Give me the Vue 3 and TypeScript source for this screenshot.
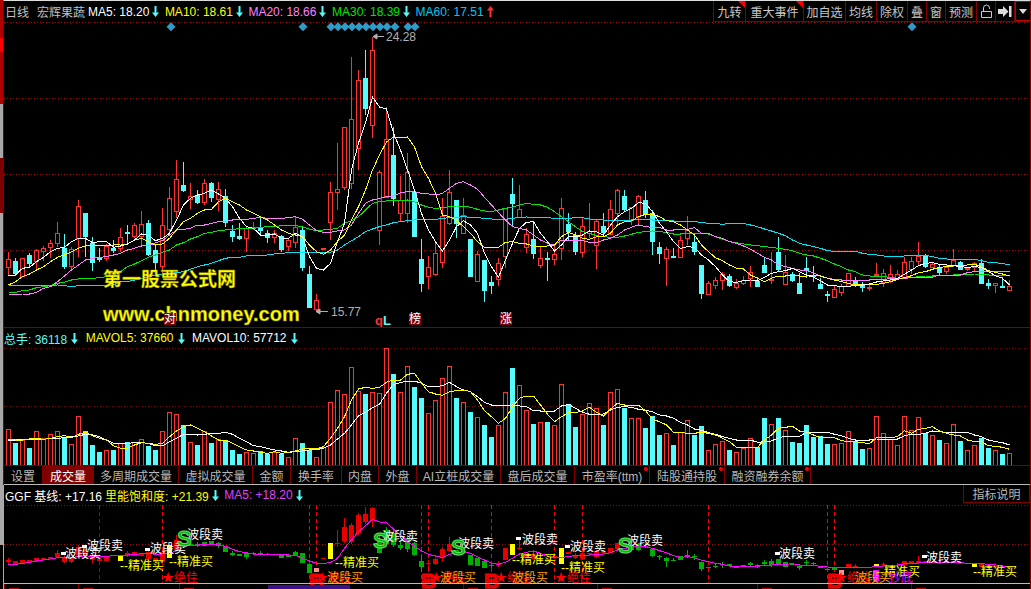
<template>
    <div class="terminal">
        <div class="strip"></div>
        <div class="main">
            <!-- K线 -->
            <div class="head">
                <span class="plain name">日线</span>
                <span class="plain stock">宏辉果蔬</span>
                <span v-for="s in maStats" :key="s.text" class="stat" :class="s.cls">
                    {{ s.text }}
                    <svg class="arrow" viewBox="0 0 7 11" width="7" height="11"><path :d="s.up ? upArrow : downArrow" :fill="s.up ? '#ff3232' : '#54fcfc'" /></svg>
                </span>
                <div class="tools">
                    <div v-for="b in tools" :key="b.key" class="tool" :class="{ flag: b.flag, last: b.key === 'menu' }" :style="{ width: b.w + 'px' }">
                        {{ b.text }}
                        <svg v-if="b.key === 'lock'" viewBox="0 0 13 15" width="13" height="15"><path d="M1.5 7.5h10v6h-10zM3.5 7V4a3 3 0 0 1 6 0v1" fill="none" stroke="#ccc" /></svg>
                        <svg v-if="b.key === 'next'" viewBox="0 0 14 11" width="14" height="11"><path d="M0 3h5V0l5.500 5.500L5 11V8H0z M11 0h2.500v11H11z" fill="#ddd" /></svg>
                        <svg v-if="b.key === 'menu'" viewBox="0 0 8 5" width="8" height="5"><path d="M0 0h8L4 5z" fill="#ddd" /></svg>
                    </div>
                </div>
            </div>
            <svg class="chart" width="1026" height="305" viewBox="4 22 1026 305">
                <line v-for="y in [22, 98, 174, 250]" :key="y" class="grid" x1="4" x2="1030" :y1="y + 0.5" :y2="y + 0.5" />
                <g shape-rendering="crispEdges">
                    <template v-for="c in candleShapes" :key="c.x">
                        <line :x1="c.x + 0.5" :x2="c.x + 0.5" :y1="c.wt" :y2="c.wb" :stroke="c.up ? '#ff3232' : '#54fcfc'" />
                        <rect v-if="c.up" :x="c.x - 1.5" :y="c.t + 0.5" width="4" :height="c.h" fill="#000" stroke="#ff3232" />
                        <rect v-else :x="c.x - 2" :y="c.t" width="5" :height="c.h + 1" fill="#54fcfc" />
                    </template>
                    <polyline v-for="l in maLines" :key="l.color" class="curve" :points="l.points" :stroke="l.color" />
                </g>
                <rect v-for="x in diamonds" :key="x" class="diamond" :x="x - 3.200" y="23.500" width="6.400" height="6.400" :transform="`rotate(45 ${x} 26.700)`" />
                <path d="M373 36.500h11M373 36.500l4-2.500v5z" stroke="#b0b0b0" fill="#b0b0b0" />
                <text class="price" x="386" y="41">24.28</text>
                <path d="M316 311.500h12M316 311.500l4-2.500v5z" stroke="#b0b0b0" fill="#b0b0b0" />
                <text class="price" x="331" y="316">15.77</text>
                <text class="mark-water" x="103" y="286">第一股票公式网</text>
                <text class="mark-water latin" x="103" y="321">www.chnmoney.com</text>
                <template v-for="m in badges" :key="m.t">
                    <rect :x="m.x" y="313" width="12" height="12" fill="#800000" />
                    <text class="badge" :x="m.x" y="323">{{ m.t }}</text>
                </template>
                <text class="ql" x="375" y="325"><tspan fill="#ff3232">q</tspan><tspan fill="#54fcfc">L</tspan></text>
            </svg>

            <!-- 成交量 -->
            <div class="head head-sub">
                <span v-for="s in volStats" :key="s.text" class="stat vol" :class="s.cls">
                    {{ s.text }}
                    <svg class="arrow" viewBox="0 0 7 11" width="7" height="11"><path :d="downArrow" fill="#54fcfc" /></svg>
                </span>
            </div>
            <svg class="chart" width="1026" height="117" viewBox="4 348 1026 117">
                <line v-for="y in [348, 406]" :key="y" class="grid dim" x1="4" x2="1030" :y1="y + 0.5" :y2="y + 0.5" />
                <g shape-rendering="crispEdges">
                    <template v-for="b in volBars" :key="b.x">
                        <rect v-if="b.up" :x="b.x - 1.5" :y="b.y + 0.5" width="4" :height="b.h" fill="#000" stroke="#ff3232" />
                        <rect v-else :x="b.x - 2" :y="b.y" width="5" :height="b.h + 1" fill="#54fcfc" />
                    </template>
                    <polyline class="curve" :points="volWhite" stroke="#fff" />
                    <polyline class="curve" :points="volYellow" stroke="#ff0" />
                </g>
            </svg>
            <div class="tabs">
                <div v-for="t in tabs" :key="t.text" class="tab" :class="{ on: t.on }" :style="{ width: t.w + 'px' }">
                    {{ t.text }}<i v-if="t.dot" class="dot"></i>
                </div>
            </div>

            <!-- GGF -->
            <div class="sub-wrap">
                <div class="head head-sub">
                    <span class="stat c-white ggf">GGF 基线: +17.16</span>
                    <span class="stat c-yellow">里能饱和度: +21.39
                        <svg class="arrow" viewBox="0 0 7 11" width="7" height="11"><path :d="downArrow" fill="#54fcfc" /></svg>
                    </span>
                    <span class="stat c-purple">MA5: +18.20
                        <svg class="arrow" viewBox="0 0 7 11" width="7" height="11"><path :d="downArrow" fill="#54fcfc" /></svg>
                    </span>
                    <div class="explain">指标说明</div>
                </div>
                <svg class="chart" width="1026" height="78" viewBox="4 505 1026 78">
                    <line v-for="y in [505, 544]" :key="y" class="grid" x1="4" x2="1030" :y1="y + 0.5" :y2="y + 0.5" />
                    <line v-for="x in dashBright" :key="x" class="dash" :x1="x + 0.5" :x2="x + 0.5" y1="505" y2="583" />
                    <line v-for="x in dashDark" :key="x" class="dash dark" :x1="x + 0.5" :x2="x + 0.5" y1="505" y2="583" />
                    <g shape-rendering="crispEdges">
                        <template v-for="c in subShapes" :key="c.x">
                            <line :x1="c.x + 0.5" :x2="c.x + 0.5" :y1="c.wt" :y2="c.wb" :stroke="c.fill" />
                            <rect :x="c.x - 2" :y="c.t" width="5" :height="c.h" :fill="c.fill" />
                        </template>
                        <polyline class="curve" :points="subLine" stroke="#f0f" />
                        <rect x="873" y="570" width="6" height="11" fill="#f0f" />
                    </g>
                    <rect v-for="a in sellArrows" :key="a.x" class="sell-arrow" :x="a.x" :y="a.y" width="5" height="3" />
                    <text v-for="t in subTexts" :key="t.x + t.t" :class="t.cls" :x="t.x" :y="t.y">{{ t.t }}</text>
                </svg>
                <div class="foot">
                    <template v-for="x in footTicks" :key="x">
                        <i class="tick" :style="{ left: x - 4 + 'px' }"></i>
                        <i class="date-mark" :style="{ left: x + 1 + 'px' }"></i>
                    </template>
                    <i class="purple"></i>
                </div>
            </div>
        </div>
    </div>
</template>

<script setup lang="ts">
// 读数都是按 3 倍截图量的，x = 8 + 7i，y 用各面板的基准换算
const pointX = (i: number) => 8 + 7 * i;
const my = (z: number) => 170 + z / 3;
const vy = (z: number) => 325 + z / 3;
const sy = (z: number) => 485 + z / 3;
const toPoints = (ys: number[], f: (z: number) => number) =>
    ys.map((z, i) => `${pointX(i) + 0.5},${f(z).toFixed(1)}`).join(' ');

const downArrow = 'M2.500 0h2v6.500H7L3.500 11 0 6.500h2.500z';
const upArrow = 'M3.500 0L7 4.500H4.500V11h-2V4.500H0z';

const maStats = [
    { text: 'MA5: 18.20', cls: 'c-white' },
    { text: 'MA10: 18.61', cls: 'c-yellow' },
    { text: 'MA20: 18.66', cls: 'c-pink' },
    { text: 'MA30: 18.39', cls: 'c-green' },
    { text: 'MA60: 17.51', cls: 'c-sky', up: true },
];
const volStats = [
    { text: '总手: 36118', cls: 'c-cyan' },
    { text: 'MAVOL5: 37660', cls: 'c-yellow' },
    { text: 'MAVOL10: 57712', cls: 'c-white' },
];
const tools = [
    { key: 'jz', text: '九转', w: 32, flag: true },
    { key: 'zd', text: '重大事件', w: 58, flag: true },
    { key: 'jzx', text: '加自选', w: 42 },
    { key: 'jx', text: '均线', w: 31 },
    { key: 'cq', text: '除权', w: 31 },
    { key: 'd', text: '叠', w: 19 },
    { key: 'c', text: '窗', w: 19 },
    { key: 'yc', text: '预测', w: 31 },
    { key: 'lock', text: '', w: 19 },
    { key: 'next', text: '', w: 19 },
    { key: 'menu', text: '', w: 15 },
];
const tabs = [
    { text: '设置', w: 39 },
    { text: '成交量', w: 51, on: true },
    { text: '多周期成交量', w: 85 },
    { text: '虚拟成交量', w: 74 },
    { text: '金额', w: 38 },
    { text: '换手率', w: 51 },
    { text: '内盘', w: 37 },
    { text: '外盘', w: 38 },
    { text: 'AI立桩成交量', w: 84 },
    { text: '盘后成交量', w: 74 },
    { text: '市盈率(ttm)', w: 75, dot: true },
    { text: '陆股通持股', w: 75, dot: true },
    { text: '融资融券余额', w: 86, dot: true },
];

const diamonds = [171, 303, 331, 338, 345, 352, 359, 366, 373, 380, 387, 395, 408, 415, 912];
const badges = [
    { x: 164, t: '对' },
    { x: 409, t: '榜' },
    { x: 500, t: '涨' },
];

// [红?, 实体上, 实体下, 影线上, 影线下]
const candles: number[][] = [
    [1, 268, 292, 245, 318], [0, 272, 310, 265, 318], [1, 263, 317, 263, 318], [0, 255, 279, 250, 295], [1, 240, 273, 238, 298],
    [1, 235, 242, 228, 272], [1, 220, 230, 210, 265], [1, 190, 220, 157, 230], [0, 233, 288, 192, 298], [1, 238, 288, 232, 298],
    [1, 109, 205, 90, 262], [0, 130, 197, 130, 262], [0, 218, 275, 200, 302], [0, 264, 266, 235, 275], [1, 228, 265, 222, 272],
    [0, 235, 240, 210, 250], [1, 202, 233, 175, 245], [0, 186, 188, 165, 220], [1, 166, 197, 160, 205], [1, 163, 198, 123, 228],
    [0, 160, 252, 150, 258], [0, 240, 276, 225, 300], [1, 166, 287, 115, 312], [1, 85, 178, 50, 190], [1, 28, 122, -30, 145],
    [0, 45, 60, -25, 65], [1, 77, 87, 40, 118], [0, 75, 96, 60, 103], [1, 40, 95, 28, 105], [0, 39, 80, 35, 95],
    [1, 58, 88, 35, 122], [0, 78, 155, 58, 170], [0, 183, 198, 165, 215], [0, 199, 204, 160, 210], [1, 175, 205, 170, 245],
    [1, 172, 174, 155, 180], [0, 175, 179, 142, 195], [0, 190, 201, 180, 218], [1, 190, 202, 180, 218], [0, 198, 236, 195, 245],
    [1, 211, 227, 205, 243], [1, 172, 215, 140, 235], [0, 180, 292, 170, 303], [0, 312, 410, 287, 412], [1, 391, 418, 372, 425],
    [1, 235, 237, 235, 237], [1, 65, 157, 35, 210], [1, 58, 67, -81, 120], [1, -129, 50, -129, 60],
    [1, -153, 40, -339, 58], [1, -270, -66, -300, 0], [0, -276, -187, -360, -165], [1, -360, -135, -400, -95], [1, 5, 180, 0, 225],
    [1, -93, 80, -188, 85], [0, -45, 85, -130, 108], [1, 90, 128, 18, 153], [1, 5, 128, -50, 160], [0, 65, 197, 60, 197],
    [0, 267, 338, 207, 365], [1, 292, 317, 258, 358], [1, 250, 313, 220, 318], [1, 137, 275, 85, 293], [1, 67, 158, 0, 165],
    [0, 90, 160, 90, 205], [1, 135, 188, 85, 188], [0, 207, 318, 207, 318], [1, 253, 332, 242, 332], [0, 270, 360, 270, 395],
    [0, 336, 345, 318, 372], [1, 280, 327, 263, 347], [1, 115, 257, 115, 293], [0, 72, 98, 25, 167], [1, 118, 140, 45, 140],
    [1, 193, 230, 175, 250], [0, 207, 248, 160, 267], [1, 265, 285, 230, 295], [0, 264, 266, 245, 332], [1, 252, 266, 225, 285],
    [1, 115, 235, 85, 270], [0, 162, 183, 130, 210], [0, 195, 243, 187, 255], [1, 168, 245, 145, 260], [1, 183, 190, 100, 205],
    [1, 153, 225, 150, 297], [0, 168, 187, 130, 195], [1, 118, 193, 90, 195], [1, 60, 128, 58, 165], [0, 78, 118, 60, 125],
    [1, 110, 150, 110, 165], [1, 78, 137, 75, 165], [0, 90, 130, 63, 145], [0, 128, 213, 120, 255], [0, 232, 248, 215, 282],
    [1, 238, 265, 232, 348], [0, 257, 259, 235, 265], [1, 210, 260, 198, 262], [1, 180, 203, 138, 225],
    [0, 217, 243, 193, 255], [0, 285, 370, 285, 387], [1, 340, 371, 333, 371], [1, 331, 345, 322, 358], [1, 312, 329, 307, 360],
    [0, 318, 345, 312, 350], [1, 340, 350, 328, 357], [1, 330, 340, 317, 345], [1, 307, 325, 288, 350], [0, 334, 348, 320, 352],
    [0, 285, 306, 262, 310], [1, 327, 331, 247, 342], [0, 246, 297, 202, 307], [1, 305, 342, 255, 342], [0, 312, 330, 307, 335],
    [0, 339, 370, 310, 372], [0, 294, 300, 262, 325], [0, 315, 318, 288, 335], [0, 342, 355, 325, 358], [0, 371, 376, 362, 397],
    [1, 358, 381, 349, 381], [1, 347, 365, 343, 378], [1, 310, 348, 310, 352], [0, 329, 342, 320, 351], [0, 345, 350, 335, 365],
    [1, 350, 352, 338, 362], [1, 312, 315, 280, 315], [1, 310, 335, 297, 350], [1, 312, 325, 285, 340], [1, 313, 325, 300, 330],
    [1, 277, 322, 260, 327], [1, 273, 298, 262, 313], [1, 257, 272, 216, 285], [0, 256, 288, 252, 295], [1, 282, 290, 277, 295],
    [0, 290, 305, 285, 318], [1, 290, 302, 285, 312], [1, 270, 285, 237, 290], [0, 277, 297, 272, 300], [1, 293, 296, 290, 302],
    [1, 280, 290, 277, 303], [0, 280, 338, 268, 340], [0, 340, 344, 327, 357], [1, 340, 346, 340, 368], [0, 348, 350, 320, 350],
    [1, 349, 361, 330, 361],
];
const candleShapes = candles.map(([up, t, b, wt, wb], i) => ({
    x: pointX(i),
    up: up === 1,
    t: Math.round(my(t)),
    h: Math.max(1, Math.round(my(b)) - Math.round(my(t))),
    wt: my(wt),
    wb: my(wb),
}));

const ma5 = [
    318, 315, 295, 292, 275, 262, 245, 235, 232, 215, 205, 205, 218, 215, 215, 232, 228, 222, 210, 192, 197, 212, 205, 190, 150, 105, 85, 75, 70, 60, 72, 85, 110, 145, 170, 175, 195, 195, 192, 205, 205, 190, 200, 260, 295, 300, 280, 215, 160,
    0, -81, -141, -219, -189, -183, -111, -60, 0, 60, 130, 180, 215, 243, 210, 170, 152, 165, 190, 250, 290, 322, 270, 220, 175, 157, 155, 190, 215, 243, 225, 200, 200, 195, 183, 185, 195, 165, 140, 125, 115, 98, 100, 125, 160, 185, 215, 235, 230,
    232, 255, 270, 290, 315, 335, 337, 332, 330, 332, 322, 310, 305, 302, 295, 305, 315, 322, 332, 345, 347, 350, 350, 345, 345, 342, 336, 333, 330, 325, 313, 300, 287, 280, 278, 283, 285, 287, 290, 292, 290, 292, 305, 317, 325, 345,
];
const ma10 = [
    345, 335, 320, 312, 300, 290, 275, 262, 255, 245, 235, 228, 225, 225, 225, 225, 222, 222, 210, 205, 215, 225, 222, 205, 180, 155, 145, 130, 120, 118, 95, 85, 95, 105, 120, 130, 140, 150, 165, 180, 190, 195, 200, 225, 245, 253, 240, 215, 195,
    150, 110, 60, 0, -45, -84, -99, -96, -99, -69, -10, 25, 70, 135, 140, 150, 170, 190, 215, 232, 232, 232, 217, 215, 220, 222, 228, 230, 228, 225, 200, 187, 195, 205, 208, 200, 200, 190, 165, 155, 153, 140, 133, 133, 140, 152, 155, 165, 180,
    195, 225, 245, 263, 272, 285, 295, 297, 315, 325, 335, 325, 318, 318, 317, 318, 318, 315, 318, 325, 330, 335, 340, 345, 342, 343, 343, 340, 335, 328, 323, 317, 308, 305, 298, 292, 290, 288, 287, 285, 283, 290, 302, 307, 312, 318,
];
const ma20 = [
    372, 375, 372, 372, 367, 355, 350, 335, 318, 300, 285, 270, 265, 262, 260, 255, 250, 240, 235, 228, 227, 218, 212, 195, 180, 178, 175, 165, 165, 160, 155, 155, 150, 148, 148, 145, 142, 145, 145, 145, 143, 140, 148, 165, 182, 187, 187, 183, 180,
    165, 130, 100, 90, 85, 80, 78, 68, 65, 65, 70, 72, 75, 70, 55, 40, 35, 45, 58, 82, 105, 128, 150, 170, 175, 180, 195, 210, 220, 225, 210, 210, 210, 212, 217, 218, 210, 205, 195, 180, 172, 165, 170, 172, 172, 180, 180, 178, 178,
    173, 190, 190, 200, 205, 215, 220, 228, 238, 250, 262, 270, 285, 290, 295, 300, 302, 308, 318, 325, 328, 330, 330, 330, 330, 330, 328, 328, 326, 326, 325, 322, 322, 322, 322, 315, 315, 315, 315, 308, 305, 305, 305, 305, 305, 305,
];
const ma30 = [
    367, 367, 362, 360, 353, 350, 347, 340, 337, 330, 327, 325, 325, 323, 320, 315, 305, 290, 282, 272, 262, 255, 247, 240, 225, 218, 207, 200, 190, 187, 182, 180, 178, 176, 175, 175, 172, 170, 170, 167, 167, 167, 170, 178, 182, 180, 178, 175, 160,
    152, 140, 120, 100, 95, 93, 92, 93, 90, 95, 105, 112, 115, 113, 110, 108, 108, 112, 118, 123, 125, 120, 115, 112, 105, 100, 103, 105, 112, 125, 140, 155, 170, 185, 190, 197, 200, 202, 202, 198, 193, 187, 185, 183, 185, 187, 192, 192, 190,
    190, 190, 192, 200, 207, 215, 218, 222, 225, 227, 230, 232, 235, 238, 242, 250, 255, 258, 265, 272, 282, 290, 300, 305, 315, 318, 320, 320, 322, 325, 325, 323, 320, 318, 318, 317, 316, 315, 313, 313, 312, 312, 315, 316, 318, 317,
];
const ma60 = [
    347, 347, 347, 347, 347, 347, 347, 345, 347, 350, 347, 347, 347, 348, 347, 345, 335, 335, 330, 325, 320, 316, 313, 310, 308, 305, 298, 290, 285, 280, 272, 265, 262, 262, 258, 256, 256, 255, 252, 250, 248, 248, 248, 248, 248, 247, 247, 240, 225,
    212, 200, 185, 177, 170, 165, 158, 155, 152, 150, 148, 148, 148, 145, 143, 142, 140, 142, 143, 145, 147, 148, 148, 145, 142, 141, 143, 143, 143, 145, 146, 145, 143, 143, 147, 148, 150, 150, 150, 150, 150, 148, 148, 150, 150, 152, 153, 155, 155,
    155, 157, 160, 160, 163, 160, 160, 160, 165, 170, 177, 183, 190, 197, 210, 220, 225, 230, 235, 242, 244, 244, 244, 244, 250, 253, 255, 258, 259, 259, 258, 256, 255, 256, 260, 265, 267, 268, 268, 268, 268, 272, 277, 278, 281, 284,
];
const maLines = [
    { color: '#00e600', points: toPoints(ma30, my) },
    { color: '#02e2f4', points: toPoints(ma60, my) },
    { color: '#ff80ff', points: toPoints(ma20, my) },
    { color: '#ffff00', points: toPoints(ma10, my) },
    { color: '#ffffff', points: toPoints(ma5, my) },
];

// 正数红柱，负数青柱
const volTops = [
    313, -354, 346, -369, 319, 340, 328, 319, -336, 358, 274, -319, -360, -381, 376, -375, 355, -350, 352, 343, -363, -375, 319, 262, 268, -300, 352, -360, 319, -354, 343, -347, -375, -387, 382, 384, -378, -386, 382, -387, 397, 340, -354, -375, 397, 367, 232, 196, 208,
    127, 199, -207, 202, 205, 70, -147, 202, 124, -186, -219, 265, 226, 160, 124, -219, 232, -261, 277, -300, -336, 301, 202, -129, 181, 256, -297, 292, -291, 301, 178, -238, -306, 268, 235, 250, -300, 202, 193, -250, 280, 280, -309, -273, -330, 325, -360, 322, 286,
    -330, -303, 376, 358, 349, -375, 382, 370, 340, -367, -279, 298, -279, 316, -351, -354, -300, -336, -333, -357, 358, 355, 319, -349, -372, 370, 274, 325, 343, 361, 274, 316, 277, -325, 331, -345, 355, 298, -348, 376, 361, -340, -369, 376, -387, 385,
];
const volBars = volTops.map((z, i) => {
    const y = Math.round(vy(Math.abs(z)));
    return { x: pointX(i), up: z > 0, y, h: 465 - y };
});
const volYellow = toPoints([
    343, 345, 345, 342, 340, 343, 340, 335, 332, 338, 328, 322, 332, 340, 345, 362, 370, 370, 360, 353, 355, 358, 355, 335, 318, 305, 300, 310, 320, 333, 345, 345, 355, 365, 375, 378, 382, 385, 380, 385, 382, 378, 372, 370, 372, 365, 340, 310, 275,
    225, 192, 187, 190, 187, 172, 165, 165, 148, 145, 175, 200, 207, 211, 200, 197, 195, 200, 225, 257, 275, 295, 280, 245, 220, 213, 213, 240, 268, 290, 275, 263, 263, 258, 247, 262, 273, 252, 235, 240, 243, 241, 257, 283, 290, 300, 322, 322, 325,
    325, 322, 325, 330, 340, 350, 367, 368, 367, 367, 345, 330, 310, 307, 304, 318, 320, 330, 338, 338, 338, 347, 350, 350, 353, 356, 338, 338, 338, 335, 317, 325, 313, 310, 305, 318, 325, 330, 333, 345, 350, 350, 362, 364, 367, 373,
], vy);
const volWhite = toPoints([
    347, 345, 343, 343, 343, 343, 340, 340, 338, 335, 333, 328, 330, 335, 345, 355, 355, 355, 353, 353, 355, 362, 363, 350, 340, 328, 328, 330, 328, 325, 325, 322, 328, 340, 350, 362, 365, 370, 375, 378, 382, 380, 378, 375, 374, 370, 360, 342, 325,
    300, 272, 262, 248, 238, 205, 178, 173, 168, 168, 175, 185, 185, 182, 172, 185, 195, 200, 215, 232, 240, 243, 242, 240, 243, 245, 257, 258, 258, 258, 243, 238, 250, 262, 268, 268, 267, 255, 247, 245, 247, 253, 256, 260, 270, 273, 280, 292, 300,
    312, 316, 323, 328, 335, 340, 345, 345, 345, 352, 350, 348, 338, 334, 334, 334, 322, 322, 322, 322, 328, 332, 340, 345, 345, 345, 342, 342, 342, 342, 332, 328, 328, 325, 318, 320, 322, 322, 322, 322, 330, 335, 345, 350, 353, 360,
], vy);

const subColors: Record<string, string> = { r: '#e60000', g: '#00b000', y: '#ffff00', p: '#ff9090' };
// [颜色, 实体上, 实体下, 影线上, 影线下]
const subCandles: [string, number, number, number?, number?][] = [
    ['r', 226, 232, 220, 240], ['r', 228, 238], ['r', 225, 237], ['r', 225, 235], ['r', 219, 230], ['r', 218, 225], ['r', 215, 222], ['r', 205, 215, 196, 218], ['r', 218, 232, 210, 234], ['r', 218, 232, 215, 234],
    ['r', 185, 210, 180, 212], ['r', 192, 212, 188, 214], ['r', 215, 225, 205, 235], ['r', 222, 228], ['r', 215, 228], ['r', 210, 214], ['y', 210, 228], ['r', 205, 212, 198, 216], ['r', 202, 212], ['r', 205, 212],
    ['r', 200, 222, 195, 225], ['r', 220, 232], ['r', 202, 230, 190, 240], ['y', 180, 218], ['r', 165, 195, 150, 200], ['g', 180, 184, 175, 188], ['g', 178, 183], ['g', 178, 183, 172, 186], ['g', 170, 182], ['g', 168, 178],
    ['g', 175, 183, 170, 188], ['g', 182, 200], ['g', 205, 210, 198, 212], ['g', 207, 212], ['g', 205, 217, 200, 222], ['g', 205, 208, 200, 211], ['g', 205, 208, 198, 210], ['g', 207, 209], ['g', 206, 209], ['g', 208, 218],
    ['g', 210, 215], ['g', 202, 212, 198, 214], ['g', 205, 235], ['g', 237, 265], ['p', 248, 262], ['r', 218, 220], ['y', 174, 222], ['r', 175, 178, 135, 185], ['r', 127, 168, 100, 175],
    ['r', 120, 172, 115, 178], ['r', 90, 145, 85, 150], ['r', 87, 110, 65, 118], ['r', 68, 108, 65, 125], ['g', 165, 203, 150, 205], ['g', 135, 178, 125, 180], ['g', 145, 180, 128, 185], ['g', 180, 190, 170, 195], ['g', 160, 193, 150, 200], ['g', 175, 210, 172, 212],
    ['g', 227, 245, 210, 260], ['r', 233, 237, 225, 248], ['r', 222, 238, 220, 240], ['r', 192, 220, 185, 232], ['r', 178, 198, 155, 200], ['g', 195, 205], ['g', 197, 205], ['g', 210, 240], ['g', 220, 243], ['g', 227, 250],
    ['g', 241, 244, 236, 250], ['r', 233, 240, 228, 245], ['r', 190, 225], ['y', 178, 210], ['r', 188, 192, 163, 195], ['r', 207, 215], ['r', 208, 222, 200, 226], ['r', 222, 228], ['r', 222, 230], ['r', 212, 218, 205, 222],
    ['y', 190, 237], ['r', 200, 207], ['r', 210, 218, 205, 222], ['r', 203, 222, 198, 225], ['r', 205, 208], ['r', 198, 215, 195, 218], ['r', 198, 203], ['r', 188, 205], ['r', 174, 192], ['g', 175, 182],
    ['g', 180, 195], ['g', 178, 195, 175, 197], ['g', 182, 185, 175, 190], ['g', 193, 213, 190, 215], ['g', 214, 217, 210, 225], ['g', 218, 228, 215, 245], ['g', 224, 226, 220, 228], ['g', 212, 225], ['g', 210, 213, 195, 218],
    ['g', 214, 217, 208, 225], ['g', 232, 252, 230, 258], ['g', 246, 249], ['g', 242, 245, 238, 248], ['g', 237, 240, 232, 248], ['g', 238, 243, 236, 246], ['g', 245, 247], ['g', 241, 243], ['g', 235, 240, 230, 246], ['g', 241, 244, 238, 248],
    ['g', 230, 236, 225, 240], ['g', 227, 240, 222, 245], ['g', 222, 236], ['g', 232, 245], ['g', 236, 241], ['g', 243, 248, 240, 254], ['g', 232, 235, 225, 240], ['g', 235, 238, 230, 240], ['g', 243, 248], ['g', 253, 256],
    ['g', 250, 254], ['p', 255, 270], ['r', 238, 246], ['r', 242, 245, 238, 248], ['r', 245, 247], ['r', 246, 248], ['y', 237, 243], ['r', 237, 240, 232, 245], ['r', 240, 243], ['r', 239, 243, 234, 246],
    ['r', 228, 240], ['r', 229, 234], ['r', 229, 233, 214, 238], ['r', 228, 232], ['r', 231, 234], ['r', 234, 237], ['r', 231, 234], ['r', 227, 231], ['r', 233, 236], ['g', 235, 237],
    ['y', 233, 245], ['r', 233, 245], ['r', 241, 244], ['r', 243, 245], ['r', 245, 247], ['r', 247, 249],
];
const subShapes = subCandles.map(([k, t, b, wt, wb], i) => ({
    x: pointX(i),
    fill: subColors[k],
    t: Math.round(sy(t)),
    h: Math.max(1, Math.round(sy(b)) - Math.round(sy(t))),
    wt: sy(wt ?? t),
    wb: sy(wb ?? b),
}));
const subLine = toPoints([
    240, 238, 235, 232, 228, 225, 222, 218, 217, 217, 215, 212, 215, 213, 214, 212, 212, 210, 209, 206, 205, 208, 207, 205, 197, 187, 180, 180, 178, 178, 180, 184, 193, 200, 203, 207, 208, 207, 208, 208, 210, 211, 220, 228, 235, 235, 233, 220, 190,
    165, 140, 122, 103, 111, 113, 132, 150, 170, 183, 198, 208, 213, 218, 208, 203, 200, 205, 215, 225, 235, 238, 232, 220, 207, 202, 198, 205, 214, 219, 218, 214, 212, 210, 210, 208, 207, 203, 195, 190, 187, 183, 185, 190, 197, 203, 212, 217, 215,
    218, 226, 230, 235, 238, 243, 245, 244, 244, 244, 241, 240, 238, 238, 236, 240, 241, 241, 244, 246, 249, 248, 247, 247, 247, 247, 244, 243, 242, 240, 236, 235, 234, 232, 231, 232, 233, 232, 233, 235, 235, 236, 238, 240, 243, 248,
], sy);

const dashBright = [162, 309, 316, 421, 428, 491, 554, 582, 708, 827, 834];
const dashDark = [99];
const sellArrows = [
    { x: 61, y: 552 }, { x: 82, y: 545 }, { x: 145, y: 548 }, { x: 516, y: 537 }, { x: 565, y: 545 }, { x: 775, y: 552 }, { x: 922, y: 555 },
];
const subTexts = [
    { x: 65, y: 558, t: '波段卖', cls: 'sell' }, { x: 87, y: 550, t: '波段卖', cls: 'sell' }, { x: 150, y: 553, t: '波段卖', cls: 'sell' },
    { x: 187, y: 539, t: '波段卖', cls: 'sell' }, { x: 382, y: 541, t: '波段卖', cls: 'sell' }, { x: 458, y: 548, t: '波段卖', cls: 'sell' },
    { x: 522, y: 544, t: '波段卖', cls: 'sell' }, { x: 570, y: 551, t: '波段卖', cls: 'sell' }, { x: 627, y: 545, t: '波段卖', cls: 'sell' },
    { x: 779, y: 558, t: '波段卖', cls: 'sell' }, { x: 926, y: 562, t: '波段卖', cls: 'sell' },
    { x: 120, y: 570, t: '--精准买', cls: 'buy' }, { x: 169, y: 566, t: '--精准买', cls: 'buy' }, { x: 335, y: 567, t: '--精准买', cls: 'buy' },
    { x: 512, y: 564, t: '--精准买', cls: 'buy' }, { x: 561, y: 572, t: '--精准买', cls: 'buy' }, { x: 876, y: 576, t: '--精准买', cls: 'buy' }, { x: 973, y: 576, t: '--精准买', cls: 'buy' },
    { x: 162, y: 582, t: '★绝佳', cls: 'best' }, { x: 316, y: 582, t: '★绝佳', cls: 'best' }, { x: 430, y: 582, t: '★绝佳', cls: 'best' },
    { x: 495, y: 582, t: '★绝佳', cls: 'best' }, { x: 555, y: 582, t: '★绝佳', cls: 'best' }, { x: 835, y: 582, t: '★绝佳', cls: 'best' },
    { x: 327, y: 582, t: '波段买', cls: 'band' }, { x: 440, y: 582, t: '波段买', cls: 'band' }, { x: 512, y: 582, t: '波段买', cls: 'band' }, { x: 855, y: 582, t: '波段买', cls: 'band' },
    { x: 889, y: 582, t: '抄底', cls: 'low' },
    { x: 177, y: 546, t: 'S', cls: 'big-s' }, { x: 373, y: 548, t: 'S', cls: 'big-s' }, { x: 451, y: 555, t: 'S', cls: 'big-s' }, { x: 618, y: 553, t: 'S', cls: 'big-s' },
    { x: 309, y: 588, t: 'B', cls: 'big-b' }, { x: 421, y: 588, t: 'B', cls: 'big-b' }, { x: 484, y: 588, t: 'B', cls: 'big-b' }, { x: 827, y: 588, t: 'B', cls: 'big-b' },
];
const footTicks = [4, 78, 179, 463, 597, 757, 911];
</script>

<style scoped>
.terminal {
    width: 1031px;
    height: 589px;
    display: flex;
    overflow: hidden;
    background: #000;
    font-family: "Liberation Sans", "Noto Sans CJK SC", sans-serif;
    font-size: 12px;
    color: #c0c0c0;
}

.strip {
    width: 3px;
    flex: none;
    background: linear-gradient(to bottom, #b00000 0, #b00000 38px, #ff0000 38px, #ff0000 52px, #b00000 52px, #b00000 104px, #a8a8a8 104px, #a8a8a8 158px, #800000 158px, #800000 213px, #a8a8a8 213px, #a8a8a8 545px, #000 545px);
}

.main {
    flex: 1;
    min-width: 0;
    display: flex;
    flex-direction: column;
    border-top: 1px solid #ddd;
    border-left: 1px solid #800000;
    border-right: 1px solid #800000;
}

.head {
    height: 21px;
    flex: none;
    display: flex;
    align-items: center;
    white-space: nowrap;
}

.head-sub {
    border-top: 1px solid #800000;
    box-sizing: border-box;
}

.plain {
    color: #c0c0c0;
}

.name {
    margin-left: 1px;
    width: 32px;
}

.stock {
    width: 51px;
}

.stat {
    display: inline-flex;
    align-items: center;
    gap: 3px;
    margin-right: 5.500px;
}

.stat.vol {
    gap: 4px;
    margin-right: 7.500px;
}

.arrow {
    flex: none;
}

.c-white { color: #fff; }
.c-yellow { color: #ff0; }
.c-pink { color: #ff80ff; }
.c-green { color: #00e600; }
.c-sky { color: #02c8f4; }
.c-cyan { color: #54fcfc; }
.c-purple { color: #e040ff; }

.ggf {
    margin-left: 1px;
    margin-right: 3px;
}

.tools {
    margin-left: auto;
    height: 21px;
    display: flex;
    border-left: 1px solid #800000;
    border-bottom: 1px solid #800000;
    box-sizing: border-box;
}

.tool {
    position: relative;
    display: flex;
    align-items: center;
    justify-content: center;
    box-sizing: border-box;
    border-right: 1px solid #800000;
    color: #c8c8c8;
}

.tool.flag::after {
    content: "";
    position: absolute;
    top: 0;
    right: 0;
    border-top: 7px solid #ff0000;
    border-left: 7px solid transparent;
}

.tool.last {
    border: 1px solid #c00000;
    border-right: none;
}

.chart {
    display: block;
    flex: none;
    overflow: visible;
}

.grid {
    stroke: #b00000;
    stroke-dasharray: 1 2;
}

.grid.dim {
    stroke: #800000;
}

.curve {
    fill: none;
}

.diamond {
    fill: #2d9cc8;
}

.price {
    fill: #b0b0b0;
    font-size: 12px;
}

.mark-water {
    fill: #ffff00;
    stroke: #8a7a00;
    stroke-width: 0.4px;
    font-size: 19px;
    font-weight: 700;
}

.mark-water.latin {
    font-size: 20px;
}

.badge {
    fill: #fff;
    font-size: 12px;
}

.ql {
    font-size: 13px;
    font-weight: 700;
}

.tabs {
    height: 20px;
    flex: none;
    display: flex;
    box-sizing: border-box;
    border-top: 1px solid #800000;
    border-bottom: 1px solid #bbb;
}

.tab {
    position: relative;
    display: flex;
    align-items: center;
    justify-content: center;
    box-sizing: border-box;
    border-right: 1px solid #800000;
    color: #b8b8b8;
    white-space: nowrap;
}

.tab.on {
    background: #800000;
    color: #fff;
}

.dot {
    position: absolute;
    top: 1px;
    right: 1px;
    width: 4px;
    height: 4px;
    border-radius: 50%;
    background: #f00;
}

.sub-wrap {
    flex: 1;
    display: flex;
    flex-direction: column;
    border-left: 1px solid #aaa;
    margin-left: -1px;
    min-height: 0;
}

.sub-wrap .head-sub {
    height: 20px;
    border-top: none;
}

.explain {
    margin-left: auto;
    width: 67px;
    height: 18px;
    align-self: flex-start;
    display: flex;
    align-items: center;
    justify-content: center;
    box-sizing: border-box;
    border: 1px solid #800000;
    border-top: none;
    color: #b8b8b8;
}

.dash {
    stroke: #ff0000;
    stroke-dasharray: 4 3;
}

.dash.dark {
    stroke: #b00000;
}

.sell-arrow {
    fill: #fff;
}

.sell {
    fill: #fff;
    font-size: 12px;
}

.buy {
    fill: #ff0;
    font-size: 12px;
}

.best {
    fill: #f00;
    font-size: 12px;
}

.band {
    fill: #ffa000;
    font-size: 12px;
}

.low {
    fill: #f0f;
    font-size: 12px;
}

.big-s {
    fill: #11b011;
    stroke: #5be05b;
    stroke-width: 1px;
    font-size: 22px;
    font-weight: 700;
}

.big-b {
    fill: #e00000;
    stroke: #f00;
    stroke-width: 1px;
    font-size: 21px;
    font-weight: 700;
}

.foot {
    position: relative;
    height: 5px;
    flex: none;
    border-top: 1px solid #bbb;
}

.tick {
    position: absolute;
    top: 0;
    width: 1px;
    height: 5px;
    background: #800000;
}

.date-mark {
    position: absolute;
    bottom: 0;
    width: 10px;
    height: 1px;
    background: #c00000;
}

.purple {
    position: absolute;
    top: 1px;
    left: 264px;
    width: 82px;
    height: 4px;
    background: #40108c;
}
</style>

<style>
html,
body {
    margin: 0;
    background: #000;
}
</style>
